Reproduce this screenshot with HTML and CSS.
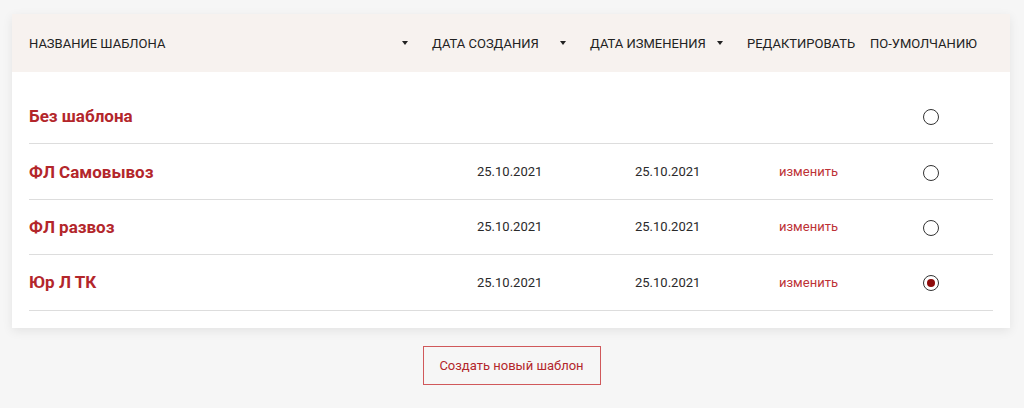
FILE: index.html
```html
<!DOCTYPE html>
<html lang="ru">
<head>
    <meta charset="UTF-8">
    <meta name="viewport" content="width=device-width, initial-scale=1.0">
    <title>Шаблоны</title>
    <link rel="stylesheet" href="styles.css">
</head>
<body>
    <div class="templates">
        <div class="templates-head">
            <div class="th th-name"><span>Название шаблона</span><i class="sort"></i></div>
            <div class="th th-created"><span>Дата создания</span><i class="sort"></i></div>
            <div class="th th-changed"><span>Дата изменения</span><i class="sort"></i></div>
            <div class="th th-edit"><span>Редактировать</span></div>
            <div class="th th-default"><span>По-умолчанию</span></div>
        </div>
        <div class="templates-body">
            <div class="row">
                <div class="name">Без шаблона</div>
                <div class="date"></div>
                <div class="date"></div>
                <div class="edit"></div>
                <div class="def"><span class="radio"></span></div>
            </div>
            <div class="row">
                <div class="name">ФЛ Самовывоз</div>
                <div class="date">25.10.2021</div>
                <div class="date">25.10.2021</div>
                <div class="edit"><a href="#">изменить</a></div>
                <div class="def"><span class="radio"></span></div>
            </div>
            <div class="row">
                <div class="name">ФЛ развоз</div>
                <div class="date">25.10.2021</div>
                <div class="date">25.10.2021</div>
                <div class="edit"><a href="#">изменить</a></div>
                <div class="def"><span class="radio"></span></div>
            </div>
            <div class="row">
                <div class="name">Юр Л ТК</div>
                <div class="date">25.10.2021</div>
                <div class="date">25.10.2021</div>
                <div class="edit"><a href="#">изменить</a></div>
                <div class="def"><span class="radio checked"></span></div>
            </div>
        </div>
    </div>
    <div class="actions">
        <button class="btn-create">Создать новый шаблон</button>
    </div>
</body>
</html>
```

FILE: styles.css
```css
body {
    font-family: Roboto, "Liberation Sans", Arial, sans-serif;
    margin: 0;
    padding: 14px 14px 0 12px;
    background-color: #f6f6f6;
    color: #222;
}
.templates {
    background-color: #fff;
    box-shadow: 0 3px 10px rgba(0, 0, 0, 0.08);
    padding-bottom: 17px;
}
.templates-head {
    display: grid;
    grid-template-columns: 389px 157px 156px 131px 1fr;
    height: 58px;
    align-items: center;
    padding-left: 17px;
    background-color: #f7f2ef;
    font-size: 13px;
    text-transform: uppercase;
    color: #222;
}
.th {
    display: flex;
    align-items: center;
    justify-content: space-between;
}
.th-name {
    padding-right: 10px;
}
.th-created {
    padding: 0 9px 0 14px;
}
.th-changed {
    padding: 0 8px 0 15px;
}
.th-edit {
    padding-left: 16px;
}
.th-default {
    padding-left: 8px;
}
.sort {
    width: 0;
    height: 0;
    border-left: 3px solid transparent;
    border-right: 3px solid transparent;
    border-top: 4px solid #222;
}
.templates-body {
    padding: 17px 17px 0 17px;
}
.row {
    display: grid;
    grid-template-columns: 448px 158px 144px 144px 1fr;
    align-items: center;
    height: 55.4px;
    box-sizing: border-box;
    border-bottom: 1px solid #ddd;
    font-size: 13px;
    color: #2a2a2a;
}
.name {
    font-size: 17px;
    font-weight: bold;
    color: #b3262b;
}
.edit a {
    color: #bd3236;
    text-decoration: none;
}
.radio {
    display: block;
    width: 16px;
    height: 16px;
    box-sizing: border-box;
    border: 1px solid #333;
    border-radius: 50%;
    position: relative;
    top: 1px;
}
.radio.checked::after {
    content: "";
    position: absolute;
    left: 3px;
    top: 3px;
    width: 8px;
    height: 8px;
    border-radius: 50%;
    background-color: #8e0a0a;
}
.actions {
    display: flex;
    justify-content: center;
    padding-top: 18px;
    padding-left: 1px;
}
.btn-create {
    width: 178px;
    height: 39px;
    background: transparent;
    border: 1px solid #d0585b;
    color: #b3262b;
    font-family: inherit;
    font-size: 13px;
}
```
